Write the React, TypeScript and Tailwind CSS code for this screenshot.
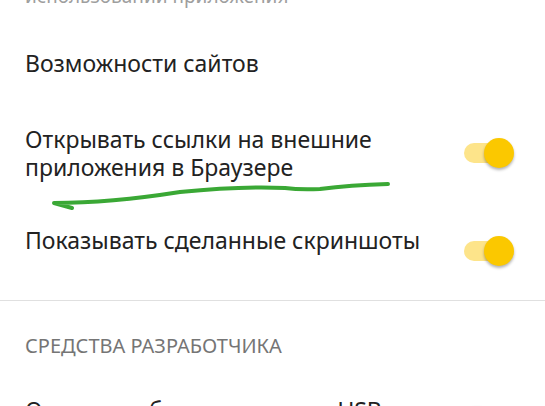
import React from 'react';

const Toggle: React.FC<{ on?: boolean }> = ({ on = true }) => (
  <div className="relative w-[52px] h-[30px] flex items-center">
    <div className={`ml-[2px] w-[38px] h-[20px] rounded-full ${on ? 'bg-[#fde48a]' : 'bg-[#d6d6d6]'}`}></div>
    <div
      className={`absolute top-0 w-[30px] h-[30px] rounded-full shadow-[0_2px_3px_rgba(0,0,0,0.3)] ${
        on ? 'right-0 bg-[#fbc800]' : 'left-0 bg-[#f1f1f1]'
      }`}
    ></div>
  </div>
);

export default function App() {
  return (
    <div
      className="relative w-[545px] h-[406px] overflow-hidden bg-white"
      style={{ fontFamily: '"Noto Sans", Roboto, sans-serif' }}
    >
      <div className="flex flex-col px-[25px]">
        <p className="-mt-[14px] text-[19px] leading-[20px] text-[#9e9e9e]">использовании приложения</p>

        <div className="mt-[43px] text-[23px] leading-[28px] text-[#222]">Возможности сайтов</div>

        <div className="mt-[48px] flex items-center justify-between">
          <div className="text-[23px] leading-[28px] text-[#222]">
            Открывать ссылки на внешние
            <br />
            приложения в Браузере
          </div>
          <div className="mr-[6px]">
            <Toggle />
          </div>
        </div>

        <div className="mt-[45px] flex items-start justify-between">
          <div className="text-[23px] leading-[28px] text-[#222]">Показывать сделанные скриншоты</div>
          <div className="mr-[6px] mt-[10px]">
            <Toggle />
          </div>
        </div>
      </div>

      <div className="mt-[34px] h-px bg-[#e0e0e0]"></div>

      <div className="px-[25px] flex flex-col">
        <div className="mt-[33px] text-[20px] leading-[24px] text-[#757575]">СРЕДСТВА РАЗРАБОТЧИКА</div>
        <div className="mt-[38px] flex items-start justify-between">
          <div className="text-[23px] leading-[28px] text-[#222]">Отладка веб-страниц через USB</div>
          <div className="mr-[6px] mt-[10px]">
            <Toggle on={false} />
          </div>
        </div>
      </div>

      <svg className="absolute left-0 top-0 pointer-events-none" width="545" height="406" viewBox="0 0 545 406">
        <path
          d="M388 184 Q 350 185 320 189 Q 300 190 285 188 Q 240 186 180 192 Q 110 203 54 203 L 72 208"
          fill="none"
          stroke="#3aa835"
          strokeWidth="4"
          strokeLinecap="round"
          strokeLinejoin="round"
        />
      </svg>
    </div>
  );
}
